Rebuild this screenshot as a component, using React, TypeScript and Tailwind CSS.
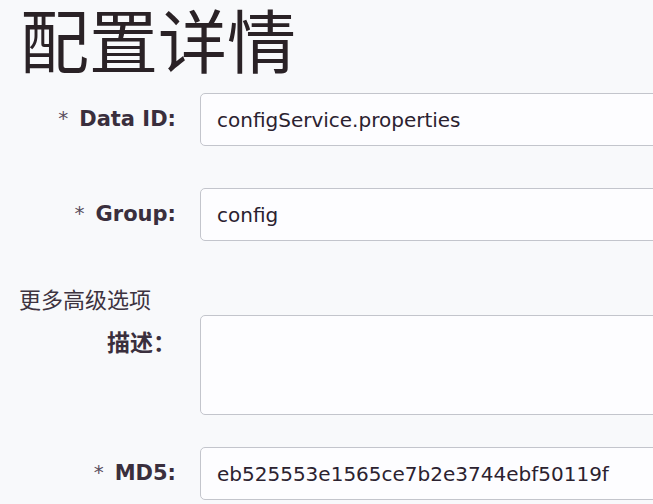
import React from "react";

const labelFont = "font-['DejaVu_Sans','Noto_Sans_CJK_SC',sans-serif]";

function Label({ star, text, cjk }: { star?: boolean; text: string; cjk?: boolean }) {
  return (
    <div className="w-[176px] shrink-0 h-[53px] flex items-center justify-end">
      {star && (
        <span className="text-[20px] font-normal text-[#5b4f5e] mr-[11px] relative top-[-2px]">*</span>
      )}
      <span
        className={
          cjk
            ? "text-[23px] font-bold text-[#3a2f3d] font-['Noto_Sans_CJK_SC',sans-serif]"
            : "text-[21px] font-bold text-[#3a2f3d]"
        }
      >
        {text}
      </span>
    </div>
  );
}

function Field({ value }: { value: string }) {
  return (
    <div className="ml-[24px] w-[480px] shrink-0 h-[53px] border border-[#c3c5cc] rounded-[5px] bg-[#fdfdff] flex items-center pl-[16px] text-[20px] text-[#2b2230]">
      {value}
    </div>
  );
}

export default function App() {
  return (
    <div className={`w-[653px] h-[504px] bg-[#f8f9fb] overflow-hidden ${labelFont}`}>
      <h1 className="pl-[20px] pt-[2px] text-[69px] leading-[72px] h-[74px] font-normal text-[#2a2226] font-['Noto_Sans_CJK_SC',sans-serif]">
        配置详情
      </h1>
      <div className="flex mt-[19px]">
        <Label star text="Data ID:" />
        <Field value="configService.properties" />
      </div>
      <div className="flex mt-[42px]">
        <Label star text="Group:" />
        <Field value="config" />
      </div>
      <div className="mt-[42px] pl-[19px] h-[30px] leading-[30px] text-[22px] text-[#3d3340] font-['Noto_Sans_CJK_SC',sans-serif]">
        更多高级选项
      </div>
      <div className="flex mt-[2px]">
        <Label text="描述：" cjk />
        <div className="ml-[24px] w-[480px] shrink-0 h-[100px] border border-[#c3c5cc] rounded-[5px] bg-[#fdfdff]" />
      </div>
      <div className="flex mt-[32px]">
        <Label star text="MD5:" />
        <Field value="eb525553e1565ce7b2e3744ebf50119f" />
      </div>
    </div>
  );
}
